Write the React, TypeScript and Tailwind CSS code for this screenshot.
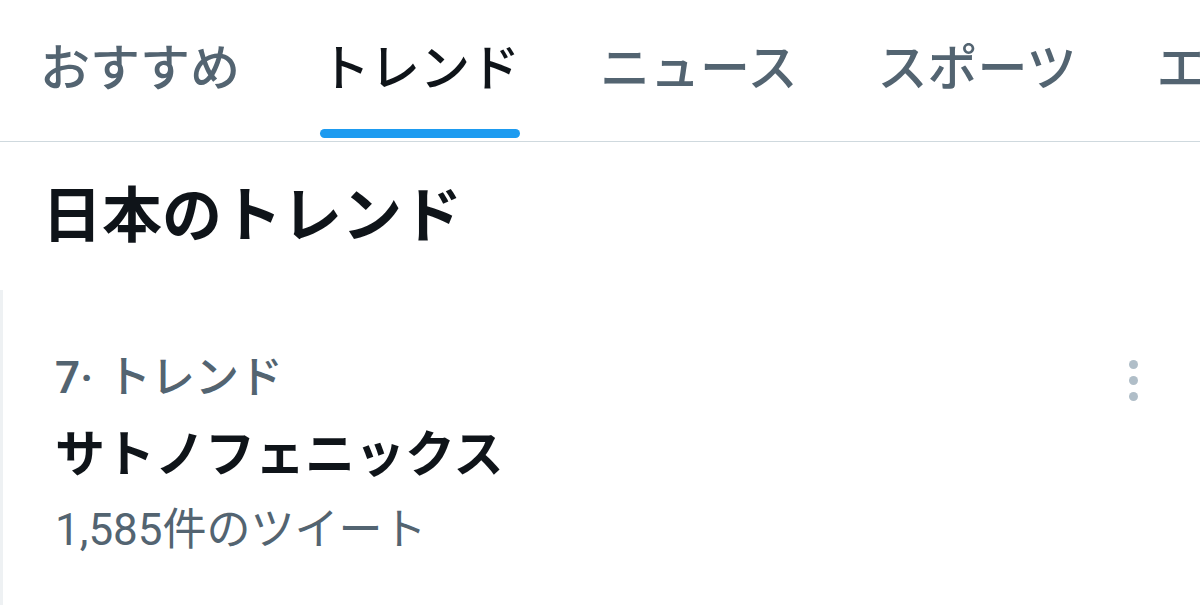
const tabs = [
  { name: 'おすすめ', active: false },
  { name: 'トレンド', active: true },
  { name: 'ニュース', active: false },
  { name: 'スポーツ', active: false },
  { name: 'エンタメ', active: false },
];

export default function App() {
  return (
    <div
      className="w-[1200px] h-[605px] overflow-hidden bg-white"
      style={{ fontFamily: 'Roboto, "Noto Sans CJK JP", sans-serif' }}
    >
      {/* Tabs */}
      <div className="h-[142px] border-b border-[#cfd9de] pl-[40px] flex gap-[80px] overflow-hidden">
        {tabs.map((tab) => (
          <div key={tab.name} className="flex flex-col shrink-0 pt-[44px]">
            <span
              className={`text-[50px] leading-[50px] font-medium whitespace-nowrap ${
                tab.active ? 'text-[#0f1419]' : 'text-[#536471]'
              }`}
            >
              {tab.name}
            </span>
            <div
              className={`mt-[35px] h-[9px] rounded-full ${tab.active ? 'bg-[#1d9bf0]' : 'bg-transparent'}`}
            />
          </div>
        ))}
      </div>

      {/* Heading */}
      <h2 className="pt-[45px] pl-[42px] text-[60px] leading-[60px] font-semibold text-[#0f1419]">
        日本のトレンド
      </h2>

      {/* Trend item */}
      <div className="mt-[43px] h-[320px] border-l-[3px] border-[#eef1f3] flex pl-[52px] pr-[62px] pt-[64px]">
        <div className="flex-1 flex flex-col">
          <span className="text-[44px] leading-[48px] text-[#536471] font-medium whitespace-nowrap">
            <span className="font-semibold">7·</span>
            <span className="ml-[14px]">トレンド</span>
          </span>
          <span className="mt-[25px] text-[50px] leading-[56px] font-semibold text-[#0f1419]">
            サトノフェニックス
          </span>
          <span className="mt-[23px] text-[44px] leading-[48px] text-[#536471]">1,585件のツイート</span>
        </div>
        <div className="flex flex-col gap-[7px] pt-[6px]">
          <div className="w-[9px] h-[9px] rounded-full bg-[#b0bec8]" />
          <div className="w-[9px] h-[9px] rounded-full bg-[#b0bec8]" />
          <div className="w-[9px] h-[9px] rounded-full bg-[#b0bec8]" />
        </div>
      </div>
    </div>
  );
}
